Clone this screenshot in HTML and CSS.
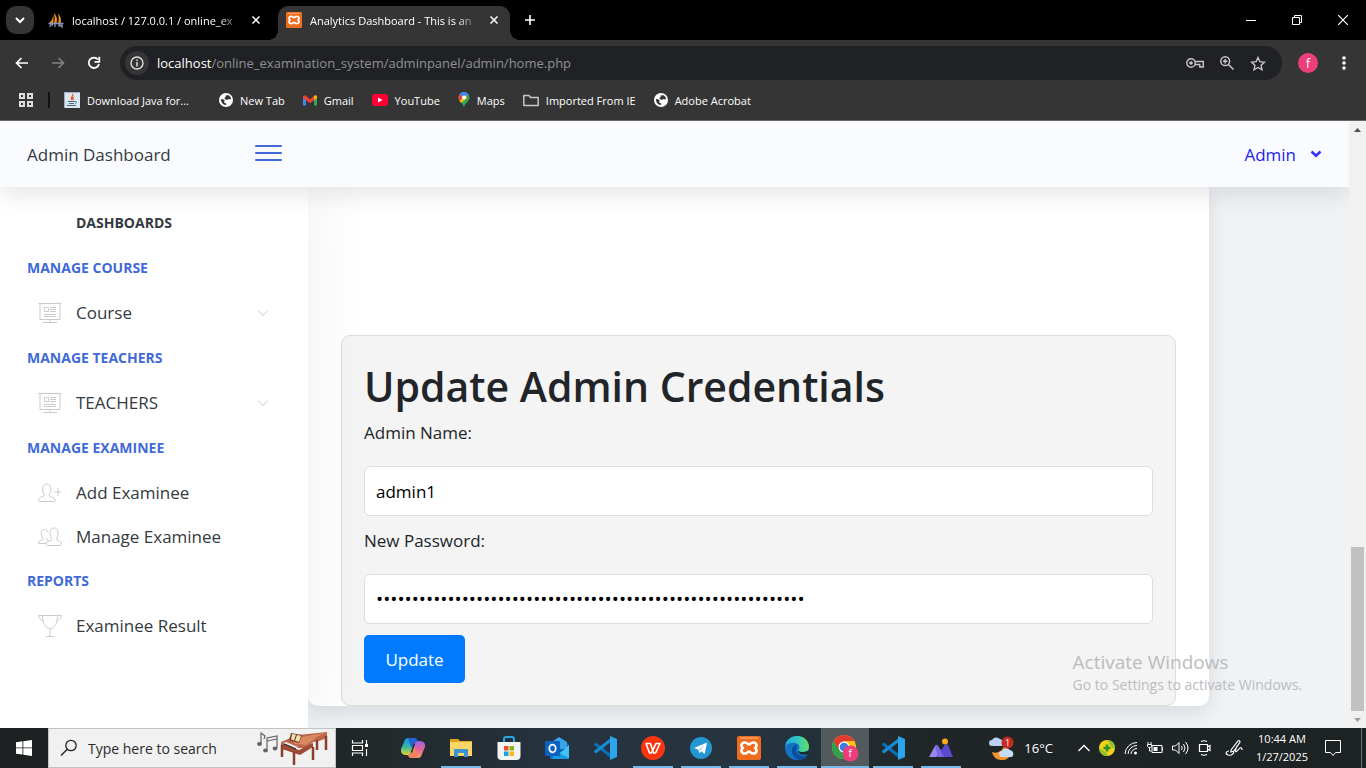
FILE: index.html
```html
<!DOCTYPE html>
<html lang="en">
<head>
<meta charset="utf-8">
<title>Analytics Dashboard</title>
<link rel="stylesheet" href="styles.css">
</head>
<body>
<svg class="defs" aria-hidden="true">
  <defs>
    <symbol id="globe" viewBox="0 0 14 14"><circle cx="7" cy="7" r="7" fill="#fff"/><path d="M2 6l2 .2 2 1.6-1 1 .5 1.2 1.5.3.3 1.5c-2.600.6-5.300-2-5.300-5.600zM6.500 2.500l3.500-.3 2.200 3-1 1.300-1.700-.5-1.500 1-2.300-1-.3-1.200 1.300-.6z" fill="#353535"/></symbol>
    <symbol id="xampp" viewBox="0 0 24 24"><rect width="24" height="24" rx="2" fill="#ef6c1f"/><path d="M3 2h18" stroke="#f9a56d" stroke-width="1.500"/><path d="M8 6.500c-4 0-4.500 4-2 5.500-2.500 1.500-2 5.500 2 5.500 2.500 0 2.500-2 4-2s1.500 2 4 2c4 0 4.500-4 2-5.500 2.500-1.500 2-5.500-2-5.500-2.500 0-2.500 2-4 2s-1.500-2-4-2z" fill="none" stroke="#fff" stroke-width="2.600" stroke-linejoin="round"/></symbol>
    <symbol id="board" viewBox="0 0 24 22"><g fill="none" stroke="#c8cbcd"><path d="M.5 1.500h23" stroke-width="1.200"/><path d="M2 2v15.500h20V2M6.500 5.500h4v4h-4zM12 5.500h6M12 7.500h6M12 9.500h6M6 12.500h12M6 14.500h12M12 17v3M5 20.500h14"/></g></symbol>
    <symbol id="down" viewBox="0 0 12 8"><path d="M1 1.500l5 5 5-5" fill="none" stroke="#c4c7c9"/></symbol>
    <symbol id="vscode" viewBox="0 0 24 24"><path d="M1 8l2-1.500L19 19v4L1 9z" fill="#0c70b5"/><path d="M1 16l2 1.500L19 5V1L1 15z" fill="#1a8ad2"/><path d="M17 0l7 3v18l-7 3z" fill="#2ba5ec"/></symbol>
  </defs>
</svg>

<header class="titlebar">
  <button class="tab-search" aria-label="Search tabs"><svg width="10" height="8" viewBox="0 0 10 8"><path d="M1 2l4 4 4-4" fill="none" stroke="#fff" stroke-width="2"/></svg></button>
  <div class="tab">
    <svg width="16" height="16" viewBox="0 0 16 16"><path d="M6 11C7 8 7 4 5.500 1 9 3 9.500 8 8.500 11zM10 11c1-3 1-6 0-9 3 2 3.500 6 2.500 9zM1 11c3-2 4-5 4-8 1 3 .8 6 0 8z" fill="#f29122"/><path d="M.5 11.500h15M2 15l.5-3h2L4 14M7 15v-3M11 15v-3l3 3v-3" stroke="#8991b8" fill="none" stroke-width="1.300"/></svg>
    <span class="tab-name">localhost / 127.0.0.1 / online_ex</span>
    <button class="close" aria-label="Close tab"><svg width="8" height="8" viewBox="0 0 8 8"><path d="M.5.5l7 7M7.500.5l-7 7" stroke="#fff" stroke-width="1.500"/></svg></button>
  </div>
  <div class="tab active">
    <svg width="16" height="16"><use href="#xampp"/></svg>
    <span class="tab-name">Analytics Dashboard - This is an</span>
    <button class="close" aria-label="Close tab"><svg width="8" height="8" viewBox="0 0 8 8"><path d="M.5.5l7 7M7.500.5l-7 7" stroke="#fff" stroke-width="1.500"/></svg></button>
  </div>
  <button class="new-tab" aria-label="New tab"><svg width="12" height="12" viewBox="0 0 12 12"><path d="M6 1v10M1 6h10" stroke="#fff" stroke-width="1.600"/></svg></button>
  <div class="win-buttons">
    <button aria-label="Minimize"><svg width="10" height="10"><path d="M0 5.500h10" stroke="#fff"/></svg></button>
    <button aria-label="Restore"><svg width="10" height="10"><path d="M.5 2.500h7v7h-7zM2.500 2V.5h7v7H8" fill="none" stroke="#fff"/></svg></button>
    <button aria-label="Close"><svg width="10" height="10"><path d="M0 0l10 10M10 0L0 10" stroke="#fff" stroke-width="1.200"/></svg></button>
  </div>
</header>

<nav class="toolbar">
  <button aria-label="Back"><svg width="14" height="12" viewBox="0 0 14 12"><path d="M13 6H2M6.500 1l-5 5 5 5" fill="none" stroke="#fff" stroke-width="1.700"/></svg></button>
  <button aria-label="Forward"><svg width="14" height="12" viewBox="0 0 14 12"><path d="M1 6h11M7.500 1l5 5-5 5" fill="none" stroke="#818181" stroke-width="1.600"/></svg></button>
  <button aria-label="Reload"><svg width="14" height="14" viewBox="0 0 14 14"><path d="M12 8a5.200 5.200 0 1 1-1-4.500" fill="none" stroke="#fff" stroke-width="1.800"/><path d="M12.300.8v5H7.500" fill="none" stroke="#fff" stroke-width="1.800"/></svg></button>
  <div class="omnibox">
    <span class="site-info"><svg width="14" height="14" viewBox="0 0 14 14"><circle cx="7" cy="7" r="6" fill="none" stroke="#ddd" stroke-width="1.400"/><path d="M7 6v4.500M7 3.400v1.500" stroke="#ddd" stroke-width="1.500"/></svg></span>
    <div class="url"><b>localhost</b>/online_examination_system/adminpanel/admin/home.php</div>
    <svg width="18" height="12" viewBox="0 0 18 12"><g fill="none" stroke="#c7c7c7" stroke-width="1.400"><circle cx="5" cy="6" r="4.200"/><path d="M9 4.500h8.300V10h-3.500V7.500H9"/></g><circle cx="5" cy="6" r="1.800" fill="#c7c7c7"/></svg>
    <svg width="14" height="14" viewBox="0 0 14 14"><g fill="none" stroke="#c7c7c7" stroke-width="1.500"><circle cx="5.200" cy="5.200" r="4.400"/><path d="M8.500 8.500l5 5M5.200 3v4.400M3 5.200h4.400"/></g></svg>
    <svg width="16" height="15" viewBox="0 0 16 15"><path d="M8 1.500l1.900 4.200 4.600.5-3.400 3.100.9 4.500L8 11.500l-4 2.300.9-4.500-3.400-3.100 4.600-.5z" fill="none" stroke="#c7c7c7" stroke-width="1.400"/></svg>
  </div>
  <button class="avatar" aria-label="Profile">f</button>
  <button aria-label="Menu"><svg width="4" height="16"><circle cx="2" cy="3" r="1.800" fill="#fff"/><circle cx="2" cy="8" r="1.800" fill="#fff"/><circle cx="2" cy="13" r="1.800" fill="#fff"/></svg></button>
</nav>

<nav class="bookmarks">
  <svg class="apps" width="14" height="14" viewBox="0 0 14 14"><path d="M1 1h4v4H1zM9 1h4v4H9zM1 9h4v4H1zM9 9h4v4H9z" fill="none" stroke="#ddd" stroke-width="2"/></svg>
  <a href="#"><svg width="16" height="16"><rect width="16" height="16" fill="#dde6ee"/><path d="M0 .5h16M.5 0v16" stroke="#9bb0c4"/><path d="M8.500 2c2 2-3 3-.5 6M10 5c-2 1-1.500 2-.5 3" fill="none" stroke="#e2572b" stroke-width="1.300"/><path d="M4 9.500h7M5 11.500h5M3 13.500h9M11 9.500c2 0 2 1.500 0 2" stroke="#42688f" fill="none"/></svg>Download Java for...</a>
  <a href="#"><svg width="14" height="14"><use href="#globe"/></svg>New Tab</a>
  <a href="#"><svg width="14" height="11" viewBox="0 0 14 11"><path d="M0 2v8.500h3V5z" fill="#4285f4"/><path d="M14 2v8.500h-3V5z" fill="#34a853"/><path d="M0 1.500Q1.200-.5 3 1l4 3.200L11 1q1.800-1.500 3 .5V3L7 8.300 0 3z" fill="#ea4335"/><path d="M11 1q1.800-1.500 3 .5V3l-3 2.300z" fill="#fbbc04"/></svg>Gmail</a>
  <a href="#"><svg width="16" height="12"><rect width="16" height="12" rx="3" fill="#ff0033"/><path d="M6 3.500v5L10.500 6z" fill="#fff"/></svg>YouTube</a>
  <a href="#"><svg width="12" height="16" viewBox="1 0 12 16"><path d="M7 0a5.500 5.500 0 0 0-5.500 5.500c0 4 4.500 5 5.500 10 1-5 5.500-6 5.500-10A5.500 5.500 0 0 0 7 0z" fill="#34a853"/><path d="M7 0a5.500 5.500 0 0 0-4.500 2.400L7 6l4.700-3A5.500 5.500 0 0 0 7 0z" fill="#4285f4"/><path d="M2.700 2.200L6 5 2.500 9C1 6.500 1.200 4 2.700 2.200z" fill="#ea4335"/><path d="M2.500 9L9 3l1 3-6 5z" fill="#fbbc04"/><circle cx="7" cy="5.500" r="2" fill="#fff"/></svg>Maps</a>
  <a href="#"><svg width="16" height="13" viewBox="0 0 16 13"><path d="M.8 11.500V1.500H6l1.500 2h7.700v8H.8z" fill="none" stroke="#c7c7c7" stroke-width="1.500" stroke-linejoin="round"/></svg>Imported From IE</a>
  <a href="#"><svg width="14" height="14"><use href="#globe"/></svg>Adobe Acrobat</a>
</nav>

<div class="viewport">
  <div class="page">
    <header class="app-header">
      <span class="brand">Admin Dashboard</span>
      <button class="hamburger" aria-label="Toggle sidebar"><i></i><i></i><i></i></button>
      <button class="user">Admin<svg width="12" height="8" viewBox="0 0 12 8"><path d="M1.500 1.500L6 5.700l4.500-4.200" fill="none" stroke="#3434f5" stroke-width="2.600"/></svg></button>
    </header>
    <div class="body">
      <aside class="sidebar">
        <a class="dash" href="#">DASHBOARDS</a>
        <h5>MANAGE COURSE</h5>
        <a class="item" href="#"><svg width="24" height="22"><use href="#board"/></svg>Course<svg class="caret" width="12" height="8"><use href="#down"/></svg></a>
        <h5>MANAGE TEACHERS</h5>
        <a class="item" href="#"><svg width="24" height="22"><use href="#board"/></svg>TEACHERS<svg class="caret" width="12" height="8"><use href="#down"/></svg></a>
        <h5>MANAGE EXAMINEE</h5>
        <a class="item" href="#"><svg width="24" height="22" viewBox="0 0 24 22"><path d="M6.500 13c.5 2-6 1.500-6 5 0 1 .5 1.500 1.500 1.500h13.500c1 0 1.500-.5 1.500-1.500 0-3.500-6.500-3-6-5 3-3.500 2.500-11-2.200-11S3.500 9.500 6.500 13zM20 6v8M16 10h7.500" fill="none" stroke="#c8cbcd"/></svg>Add Examinee</a>
        <a class="item" href="#"><svg width="24" height="22" viewBox="0 0 24 22"><path d="M14 13c.5 2-6 1.500-6 5 0 1 .3 1.500 1.200 1.500h13c1 0 1.300-.5 1.300-1.500 0-3.500-5.500-3-5-5C21 9 20.500 2 16 2s-5 7-2 11zM8 17.500H.5c0-4 5-2.500 4.500-5C2 9 3 3.500 6.500 3.500c2 0 3 1 3.500 3M8.500 12c-.5 2 1 1.500 2 2" fill="none" stroke="#c8cbcd"/></svg>Manage Examinee</a>
        <h5>REPORTS</h5>
        <a class="item" href="#"><svg width="24" height="24" viewBox="0 0 24 24"><path d="M4.500 1.500h15c0 7-2.500 13-7.500 13s-7.500-6-7.500-13zM4.500 1.500h-4c0 2 2 4.500 5 6M19.500 1.500h4c0 2-2 4.500-5 6M12 15v8M8 22.500h8" fill="none" stroke="#c8cbcd"/></svg>Examinee Result</a>
      </aside>
      <main class="content">
        <section class="panel">
          <form class="creds">
            <h1>Update Admin Credentials</h1>
            <label for="name">Admin Name:</label>
            <input id="name" type="text" value="admin1">
            <label for="pass">New Password:</label>
            <input id="pass" type="password" value="123456789012345678901234567890123456789012345678901234567890">
            <button type="button">Update</button>
          </form>
        </section>
      </main>
    </div>
    <div class="watermark"><strong>Activate Windows</strong><span>Go to Settings to activate Windows.</span></div>
  </div>
  <div class="scrollbar">
    <svg width="7" height="4"><path d="M0 4L3.500 0 7 4z" fill="#505050"/></svg>
    <span class="thumb"></span>
    <svg width="7" height="4"><path d="M0 0l3.500 4L7 0z" fill="#a0a0a0"/></svg>
  </div>
</div>

<footer class="taskbar">
  <button class="start" aria-label="Start"><svg width="16" height="16" viewBox="0 0 16 16"><path d="M0 2.300l6.500-1v6.200H0zM7.300 1.200L16 0v7.500H7.300zM0 8.300h6.500v6.300L0 13.700zM7.300 8.300H16V16l-8.700-1.300z" fill="#fff"/></svg></button>
  <div class="search">
    <svg width="18" height="18" viewBox="0 0 18 18"><circle cx="11" cy="6.500" r="5.200" fill="none" stroke="#222" stroke-width="1.300"/><path d="M7.300 10.200L1 16.500" stroke="#222" stroke-width="1.400"/></svg>
    <input type="text" aria-label="Search" placeholder="Type here to search">
    <svg width="72" height="36" viewBox="0 0 72 36"><g stroke="#646464" stroke-width="1.200" fill="#646464"><path d="M5 14V3l4 3-1 3" fill="none"/><ellipse cx="3.500" cy="14" rx="1.800" ry="1.400"/><path d="M11 20V8l10-2v12M11 11l10-2" fill="none"/><ellipse cx="9.500" cy="20.500" rx="1.800" ry="1.400"/><ellipse cx="19" cy="18.500" rx="1.800" ry="1.400"/></g><path d="M25 12l17-7 29-3v6l-8 3-6 1-6 6H40L25 15z" fill="#bc6547"/><path d="M39 8l30-5-8 4-5 4-6 4-12-1z" fill="#d8875f"/><path d="M25 14l18 6 14-7v4l-13 8-18-6z" fill="#9f4a35"/><path d="M26 15v12M38 22v13M57 17v13M61 10v10M70 6v14" stroke="#8c3d2c" stroke-width="2.500"/><path d="M27 13l3-1 12 5-2 1.500z" fill="#eee"/><path d="M28 14l12 5" stroke="#222" stroke-width="1.200"/><path d="M35 3l11 2-3 8-10-3z" fill="#6a3a20"/><path d="M36 4l4 .5-2 6-3-1zM41 5l4 .8-2 6-4-1z" fill="#f1dfb1"/></svg>
  </div>
  <div class="apps-row">
    <button aria-label="Task view"><svg width="18" height="18" viewBox="0 0 18 18"><path d="M1.500 1v3h10V1M1.500 17v-3h10v3M1.500 6.500h10v5h-10zM15.500 1v4M15.500 10v7" fill="none" stroke="#fff" stroke-width="1.200"/><path d="M14 5h3v3h-3z" fill="#fff"/></svg></button>
    <button aria-label="Copilot"><svg width="24" height="24" viewBox="0 0 24 24"><defs><linearGradient id="c1" x2="0" y2="1"><stop stop-color="#1d8eea"/><stop offset=".5" stop-color="#33b5a5"/><stop offset="1" stop-color="#e8d52d"/></linearGradient><linearGradient id="c2" x2="0" y2="1"><stop stop-color="#9a63e8"/><stop offset=".5" stop-color="#e8619c"/><stop offset="1" stop-color="#fba55c"/></linearGradient></defs><path d="M7 2h8l-5 15q-1 3-4 2-7 0-6-6L3 6q1-4 4-4z" fill="url(#c1)"/><path d="M17 22H9l5-15q1-3 4-2 7 0 6 6l-3 7q-1 4-4 4z" fill="url(#c2)"/><path d="M7 2h7q2 0 3 4-3-1-4 2l-1 3h-2z" fill="#2464d0"/><path d="M17 22h-7q-3 0-3-4 3 1 4-2l1-4h2z" fill="#f4845f"/><path d="M12.500 8h1.500l-2.800 8.500H9.700z" fill="#232e36"/></svg></button>
    <button class="open" aria-label="File Explorer"><svg width="22" height="20" viewBox="0 0 22 20"><path d="M0 1h8l2 2h12v5H0z" fill="#e0a51f"/><path d="M0 4h22v14H0z" fill="#fbd568"/><path d="M4 19v-7q0-1 1-1h12q1 0 1 1v7h-4v-4H8v4z" fill="#3e94d1"/></svg></button>
    <button aria-label="Store"><svg width="24" height="24" viewBox="0 0 24 24"><path d="M7 7V3q0-2 2-2h6q2 0 2 2v4" fill="none" stroke="#27a8df" stroke-width="2"/><path d="M.5 6h23v14q0 4-4 4h-15q-4 0-4-4z" fill="#f4f4f4"/><path d="M7 10h4.500v4.500H7z" fill="#f0511d"/><path d="M12.500 10H17v4.500h-4.500z" fill="#7fba16"/><path d="M7 15.500h4.500V20H7z" fill="#12a3ee"/><path d="M12.500 15.500H17V20h-4.500z" fill="#fdb813"/></svg></button>
    <button aria-label="Outlook"><svg width="25" height="24" viewBox="0 0 25 24"><path d="M5 9l9-8 10 8v14H5z" fill="#1569bd"/><path d="M8 5l6-4 8 5v7H8z" fill="#37a6e8"/><path d="M24 9v12q0 2-2 2H7l13-10z" fill="#43c4f1"/><path d="M7 13l17 9q-1 1-2 1H8z" fill="#179bdf"/><rect y="5" width="15" height="15" rx="1" fill="#0c62c0"/><ellipse cx="7.500" cy="12.500" rx="3.200" ry="3.800" fill="none" stroke="#fff" stroke-width="1.800"/></svg></button>
    <button aria-label="VS Code"><svg width="24" height="24"><use href="#vscode"/></svg></button>
    <button class="open" aria-label="WPS Office"><svg width="24" height="24" viewBox="0 0 24 24"><circle cx="12" cy="12" r="12" fill="#f9350f"/><path d="M4.500 7.500h5l3 9.500h2l4.500-9.500h-4L12 14M5 7.500L8.500 17h1.800l3.200-7" fill="none" stroke="#fff" stroke-width="1.600" stroke-linejoin="round"/></svg></button>
    <button class="open" aria-label="Telegram"><svg width="22" height="22" viewBox="0 0 22 22"><circle cx="11" cy="11" r="11" fill="#2497d2"/><path d="M4 11l13-5.500-2.300 11.500-3.500-2.700-2 2-.7-3.500z" fill="#fff"/><path d="M8.500 12.500L15 7.500l-5 6.500" fill="#b6d9ec"/></svg></button>
    <button class="open" aria-label="XAMPP"><svg width="24" height="24"><use href="#xampp"/></svg></button>
    <button class="open" aria-label="Edge"><svg width="24" height="24" viewBox="0 0 24 24"><defs><linearGradient id="e1"><stop stop-color="#22a5dd"/><stop offset=".5" stop-color="#30c6c9"/><stop offset="1" stop-color="#66df55"/></linearGradient></defs><circle cx="12" cy="12" r="12" fill="#1374c6"/><path d="M0 11C1-3 22-4 24 10c0 5-4 6.500-7 6-3 0-4-1.500-3-3 2-4-3-7-7-6-4 0-6 2-7 4z" fill="url(#e1)"/><path d="M12 8c-8 3-6 13 2 16 4 0 7-2 9-5-6 3-12-1-12-5 0-2 1-2 1-6z" fill="#0b4f9f"/><path d="M13 14q0 6 10 4l1-3-6 1q-5 0-5-2z" fill="#1e2a2e"/></svg></button>
    <button class="open current" aria-label="Chrome"><svg width="27" height="27" viewBox="0 0 27 27"><circle cx="12" cy="12" r="12" fill="#fbc116"/><path d="M12 12L1.600 6A12 12 0 0 0 12 24l5-9z" fill="#2ba24c"/><path d="M1.600 6A12 12 0 0 1 22.400 6H12l-5 9z" fill="#e33b2e"/><circle cx="12" cy="12" r="5.500" fill="#fff"/><circle cx="12" cy="12" r="4.300" fill="#3a7ce8"/><circle cx="18.500" cy="18.500" r="8" fill="#ec3e7a"/><text x="16.500" y="22" font-family="Open Sans, sans-serif" font-size="10" fill="#fff">f</text></svg></button>
    <button class="open" aria-label="VS Code window"><svg width="24" height="24"><use href="#vscode"/></svg></button>
    <button class="open" aria-label="Photos"><svg width="24" height="20" viewBox="0 0 24 20"><path d="M0 19L6 8q1.500-2 3 0l5 8-2 3z" fill="#9d86ee"/><path d="M7 19L16 7q1.500-1.500 3 0l5 12z" fill="#5b4ad0"/><path d="M6 8q1.500-2 3 0l6 11H9z" fill="#7868e6"/><circle cx="16" cy="3.500" r="3" fill="#fbab18"/></svg></button>
  </div>
  <div class="tray">
    <svg width="26" height="24" viewBox="0 0 26 24"><path d="M15 5a9 9 0 0 1-12 11 10 10 0 0 0 19 2z" fill="#f4962b"/><path d="M3 10a3 3 0 0 1 0-6 5 5 0 0 1 8-1 4 4 0 0 1 2 7z" fill="#b9d2f4"/><path d="M13 21a3 3 0 0 1 0-6 5 5 0 0 1 8-1 4 4 0 0 1 2 7z" fill="#c5dbf7"/><circle cx="18.500" cy="6.500" r="6" fill="#c52b25"/><text x="16" y="10" font-family="Open Sans, sans-serif" font-size="9" fill="#fff">1</text></svg>
    <span class="temp">16°C</span>
    <svg width="12" height="8" viewBox="0 0 12 8"><path d="M.5 7L6 1.500 11.500 7" fill="none" stroke="#fff" stroke-width="1.300"/></svg>
    <svg width="16" height="16"><circle cx="8" cy="8" r="8" fill="#f2d21b"/><path d="M8 0a8 8 0 0 1 8 8h-3z" fill="#8bc52e"/><path d="M0 8a8 8 0 0 0 8 8v-3z" fill="#8bc52e"/><path d="M8 4.500v7M4.500 8h7" stroke="#2b9130" stroke-width="2.600"/></svg>
    <svg width="14" height="14"><g fill="none" stroke="#fff"><path d="M1 13A12 12 0 0 1 13 1.500"/><path d="M4 13a9 9 0 0 1 9-8.500"/><path d="M7 13a6 6 0 0 1 6-5.500"/></g><circle cx="11.500" cy="12" r="1.500" fill="#fff"/></svg>
    <svg width="16" height="14"><path d="M5 4.500h10v7H5zM15.500 6.500v3M1 1v2M4 1v2M.5 3.500h4v2l-1 1h-2l-1-1zM2.500 7v3h2" fill="none" stroke="#fff"/><path d="M6.500 6h4v4h-4z" fill="#fff"/></svg>
    <svg width="17" height="14"><path d="M.5 5h3L7 1.500v11L3.500 9h-3zM9.500 5q1.500 2 0 4M11.500 3q3 4 0 8M13.500 1q5 6 0 12" fill="none" stroke="#fff"/></svg>
    <svg width="14" height="16"><path d="M1.500 4.500h8v7h-8zM9.500 7l2.500-1.500v5L9.500 9M3 1.500q3-1.500 6 0M3 14.500q3 1.500 6 0" fill="none" stroke="#fff" stroke-width="1.200"/></svg>
    <svg class="pen" width="18" height="17"><path d="M6 10l7-9q2-1 2 1l-6 9-3 1zM8 11c2 2-1 5-5 4-3-1-2-4 1-4M12 6c-2 4-2 8 1 4s4-2 4 0" fill="none" stroke="#fff" stroke-width="1.200"/></svg>
    <div class="clock"><span>10:44 AM</span><span>1/27/2025</span></div>
    <svg width="16" height="16"><path d="M.5.5h15v12h-5L8 15.500 5.500 12.500h-5z" fill="none" stroke="#fff"/></svg>
  </div>
</footer>
</body>
</html>
```
FILE: styles.css
```css
* { box-sizing: border-box; }
body {
  margin: 0;
  height: 100vh;
  display: flex;
  flex-direction: column;
  overflow: hidden;
  font-family: "Open Sans", "Noto Sans", sans-serif;
  background: #353535;
}
button { border: 0; padding: 0; background: none; font: inherit; color: inherit; display: flex; align-items: center; justify-content: center; flex-shrink: 0; }
a { color: inherit; text-decoration: none; }
svg { flex-shrink: 0; display: block; }
.defs { position: absolute; width: 0; height: 0; }

/* Tab strip */
.titlebar { height: 40px; background: #000; display: flex; align-items: center; color: #fff; font-size: 12px; flex-shrink: 0; padding-left: 6px; }
.tab-search { width: 28px; height: 28px; border-radius: 10px; background: #353535; }
.tab { display: flex; align-items: center; gap: 8px; width: 232px; height: 34px; margin-top: 6px; padding: 0 2px 6px 14px; }
.tab.active { background: #353535; border-radius: 10px 10px 0 0; margin-left: 12px; padding: 0 8px 6px 8px; position: relative; }
.tab.active::before, .tab.active::after { content: ""; position: absolute; bottom: 0; width: 10px; height: 10px; }
.tab.active::before { left: -10px; background: radial-gradient(circle at 0 0, #000 10px, #353535 10px); }
.tab.active::after { right: -10px; background: radial-gradient(circle at 100% 0, #000 10px, #353535 10px); }
.tab-name { flex: 1; white-space: nowrap; font-size: 11px; -webkit-mask-image: linear-gradient(90deg, #000 88%, transparent); mask-image: linear-gradient(90deg, #000 88%, transparent); }
.close { width: 16px; height: 16px; }
.new-tab { width: 28px; height: 28px; margin-left: 6px; }
.win-buttons { margin-left: auto; display: flex; }
.win-buttons button { width: 46px; height: 40px; }

/* Address bar */
.toolbar { height: 46px; display: flex; align-items: center; flex-shrink: 0; padding: 0 8px 0 4px; }
.toolbar button { width: 36px; height: 34px; }
.toolbar button.avatar { width: 20px; height: 20px; border-radius: 50%; background: #ec3e7a; color: #fff; font-size: 12px; margin: 0 12px 0 16px; }
.toolbar button:last-child { width: 28px; }
.omnibox { flex: 1; height: 34px; border-radius: 17px; background: #202124; margin-left: 8px; padding: 0 16px 0 5px; display: flex; align-items: center; gap: 16px; }
.site-info { width: 24px; height: 24px; border-radius: 50%; background: #353535; display: flex; align-items: center; justify-content: center; }
.url { flex: 1; font-size: 13px; color: #8f9194; margin-left: -8px; }
.url b { font-weight: 400; color: #fff; }
.bookmarks { height: 35px; display: flex; align-items: center; gap: 18px; padding: 0 19px 6px; color: #fff; font-size: 11px; border-bottom: 1px solid #67676b; flex-shrink: 0; white-space: nowrap; }
.bookmarks a { display: flex; align-items: center; gap: 7px; }
.bookmarks .apps + a { border-left: 2px solid #111; padding-left: 14px; margin-left: -3px; min-width: 153px; }

/* Web page */
.viewport { flex: 1; display: flex; min-height: 0; }
.page { flex: 1; display: flex; flex-direction: column; position: relative; min-width: 0; background: #eff3f6; overflow: hidden; }
.app-header { height: 66px; background: #fafbfe; display: flex; align-items: center; padding: 0 27px; flex-shrink: 0; position: relative; z-index: 2; box-shadow: 0 8px 24px rgba(4, 9, 20, .1); font-size: 17px; color: #343a40; }
.brand { width: 228px; }
.hamburger { flex-direction: column; gap: 5px; width: 27px; padding-bottom: 2px; }
.hamburger i { width: 100%; height: 2px; background: #3f6ad8; border-radius: 1px; }
.user { margin-left: auto; gap: 14px; color: #1d1df0; }
.body { flex: 1; display: flex; min-height: 0; }
.sidebar { width: 308px; background: #fff; box-shadow: 7px 0 60px rgba(0, 0, 0, .06); position: relative; z-index: 1; padding: 13px 39px 0 27px; color: #343a40; flex-shrink: 0; }
.sidebar a, .sidebar h5 { display: flex; align-items: center; height: 45px; margin: 0; }
.sidebar h5, .dash { font-size: 14px; font-weight: 700; }
.sidebar h5 { color: #3f6ad8; }
.dash { padding-left: 49px; }
.item { font-size: 17px; gap: 14px; padding-left: 11px; }
.sidebar .item + .item { height: 43px; }
.caret { margin-left: auto; }
.content { flex: 1; display: flex; padding: 0 140px 22px 0; min-width: 0; }
.panel { flex: 1; min-width: 0; background: #fff; border-radius: 0 0 10px 10px; box-shadow: 0 6px 20px rgba(4, 9, 20, .1); padding: 0 33px; display: flex; flex-direction: column; justify-content: flex-end; }
.creds { background: #f4f4f4; border: 1px solid #ddd; border-radius: 9px; padding: 22px; color: #212529; font-size: 17px; }
.creds h1 { margin: 0 0 5px; font-size: 41px; line-height: 56px; font-weight: 600; }
.creds label { display: block; line-height: 27px; margin-bottom: 20px; }
.creds input { display: block; width: 100%; height: 50px; padding: 0 11px; margin-bottom: 11px; border: 1px solid #ddd; border-radius: 6px; background: #fff; color: #000; font: inherit; }
.creds input[type="password"] { font-size: 19px; }
.creds button { width: 101px; height: 48px; background: #007bff; color: #fff; border-radius: 5px; }
.watermark { position: absolute; right: 47px; bottom: 33px; z-index: 3; display: flex; flex-direction: column; color: #bbbcbe; font-size: 14px; line-height: 20px; }
.watermark strong { font-weight: 400; font-size: 19px; line-height: 26px; }
.scrollbar { width: 17px; background: #f1f1f1; display: flex; flex-direction: column; align-items: center; padding: 7px 0 6px; }
.thumb { width: 13px; height: 164px; background: #c1c1c1; margin-top: auto; margin-bottom: 7px; }

/* Taskbar */
.taskbar { height: 40px; display: flex; flex-shrink: 0; background: linear-gradient(90deg, #1c2021, #202726 25%, #263340 42%, #263540 55%, #202627 68%, #1d2323); color: #fff; }
.start { width: 48px; }
.search { width: 288px; background: #f1f1f1; border: 1px solid #c3c3c3; display: flex; align-items: center; padding: 0 7px 0 11px; gap: 10px; flex-shrink: 0; }
.search input { flex: 1; min-width: 0; border: 0; padding: 0; background: none; font: inherit; font-size: 14px; }
.search input::placeholder { color: #2b2b2b; }
.apps-row { display: flex; }
.apps-row button { width: 48px; height: 40px; position: relative; }
.apps-row button:first-child { margin-right: 5px; }
.open::after { content: ""; position: absolute; left: 4px; right: 4px; bottom: 0; height: 2px; background: #76b9ed; }
.current { background: #535a5d; }
.current::after { left: 0; right: 0; }
.tray { margin: 0 4px 0 auto; display: flex; align-items: center; gap: 9px; padding-right: 20px; border-right: 1px solid #6d7272; }
.temp { font-size: 13px; margin-right: 16px; }
.pen { margin: 0 4px; }
.clock { display: flex; flex-direction: column; align-items: center; font-size: 11px; line-height: 18px; margin-right: 8px; }
```
